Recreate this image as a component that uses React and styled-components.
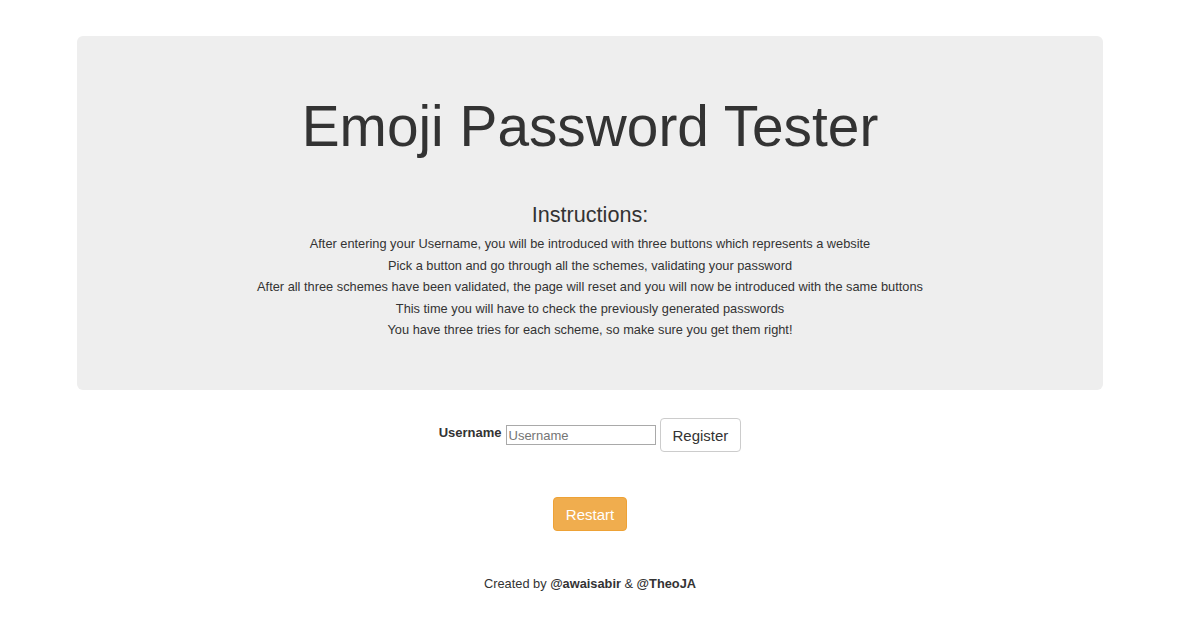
import React, { useState } from "react";
import styled, { createGlobalStyle } from "styled-components";

const GlobalStyle = createGlobalStyle`
  body {
    margin: 0;
    background: #fff;
    font-family: "Liberation Sans", Arial, sans-serif;
    font-size: 14px;
    line-height: 1.42857;
    color: #333;
  }
`;

const Page = styled.div`
  padding-top: 36px;
  text-align: center;
`;

const Jumbotron = styled.div`
  width: 1026px;
  height: 354px;
  box-sizing: border-box;
  margin: 0 auto;
  padding: 60px 60px 0;
  background: #eee;
  border-radius: 6px;
`;

const Title = styled.h1`
  margin: 0;
  font-size: 56.8px;
  font-weight: 400;
  line-height: 1.1;
`;

const SubTitle = styled.h3`
  margin: 45px 0 0;
  font-size: 21.6px;
  font-weight: 400;
  line-height: 1.1;
`;

const Lines = styled.div`
  margin-top: 6px;
`;

const Line = styled.p`
  margin: 0;
  font-size: 12.8px;
  line-height: 21.5px;
`;

const Form = styled.form`
  display: flex;
  justify-content: center;
  align-items: center;
  gap: 4px;
  margin-top: 28px;
`;

const Label = styled.label`
  font-weight: 700;
  font-size: 13px;
  margin-top: -4px;
`;

const Input = styled.input`
  width: 150px;
  height: 20px;
  box-sizing: border-box;
  border: 1px solid #a9a9a9;
  padding: 1px 2px;
  font-family: "Liberation Sans", Arial, sans-serif;
  font-size: 13px;
  &::placeholder {
    color: #757575;
  }
`;

const Button = styled.button`
  height: 34px;
  padding: 6px 12px;
  font-family: "Liberation Sans", Arial, sans-serif;
  font-size: 15px;
  line-height: 1.42857;
  border-radius: 4px;
  border: 1px solid ${({ $warning }) => ($warning ? "#eea236" : "#ccc")};
  background: ${({ $warning }) => ($warning ? "#f0ad4e" : "#fff")};
  color: ${({ $warning }) => ($warning ? "#fff" : "#333")};
  cursor: pointer;
`;

const RestartRow = styled.div`
  margin-top: 45px;
`;

const Footer = styled.p`
  margin: 44px 0 0;
  font-size: 12.8px;
`;

const lines = [
  "After entering your Username, you will be introduced with three buttons which represents a website",
  "Pick a button and go through all the schemes, validating your password",
  "After all three schemes have been validated, the page will reset and you will now be introduced with the same buttons",
  "This time you will have to check the previously generated passwords",
  "You have three tries for each scheme, so make sure you get them right!",
];

export default function App() {
  const [name, setName] = useState("");
  return (
    <Page>
      <GlobalStyle />
      <Jumbotron>
        <Title>Emoji Password Tester</Title>
        <SubTitle>Instructions:</SubTitle>
        <Lines>
          {lines.map((l) => (
            <Line key={l}>{l}</Line>
          ))}
        </Lines>
      </Jumbotron>
      <Form onSubmit={(e) => e.preventDefault()}>
        <Label htmlFor="username">Username</Label>
        <Input
          id="username"
          placeholder="Username"
          value={name}
          onChange={(e) => setName(e.target.value)}
        />
        <Button type="submit">Register</Button>
      </Form>
      <RestartRow>
        <Button $warning>Restart</Button>
      </RestartRow>
      <Footer>
        Created by <b>@awaisabir</b> &amp; <b>@TheoJA</b>
      </Footer>
    </Page>
  );
}
